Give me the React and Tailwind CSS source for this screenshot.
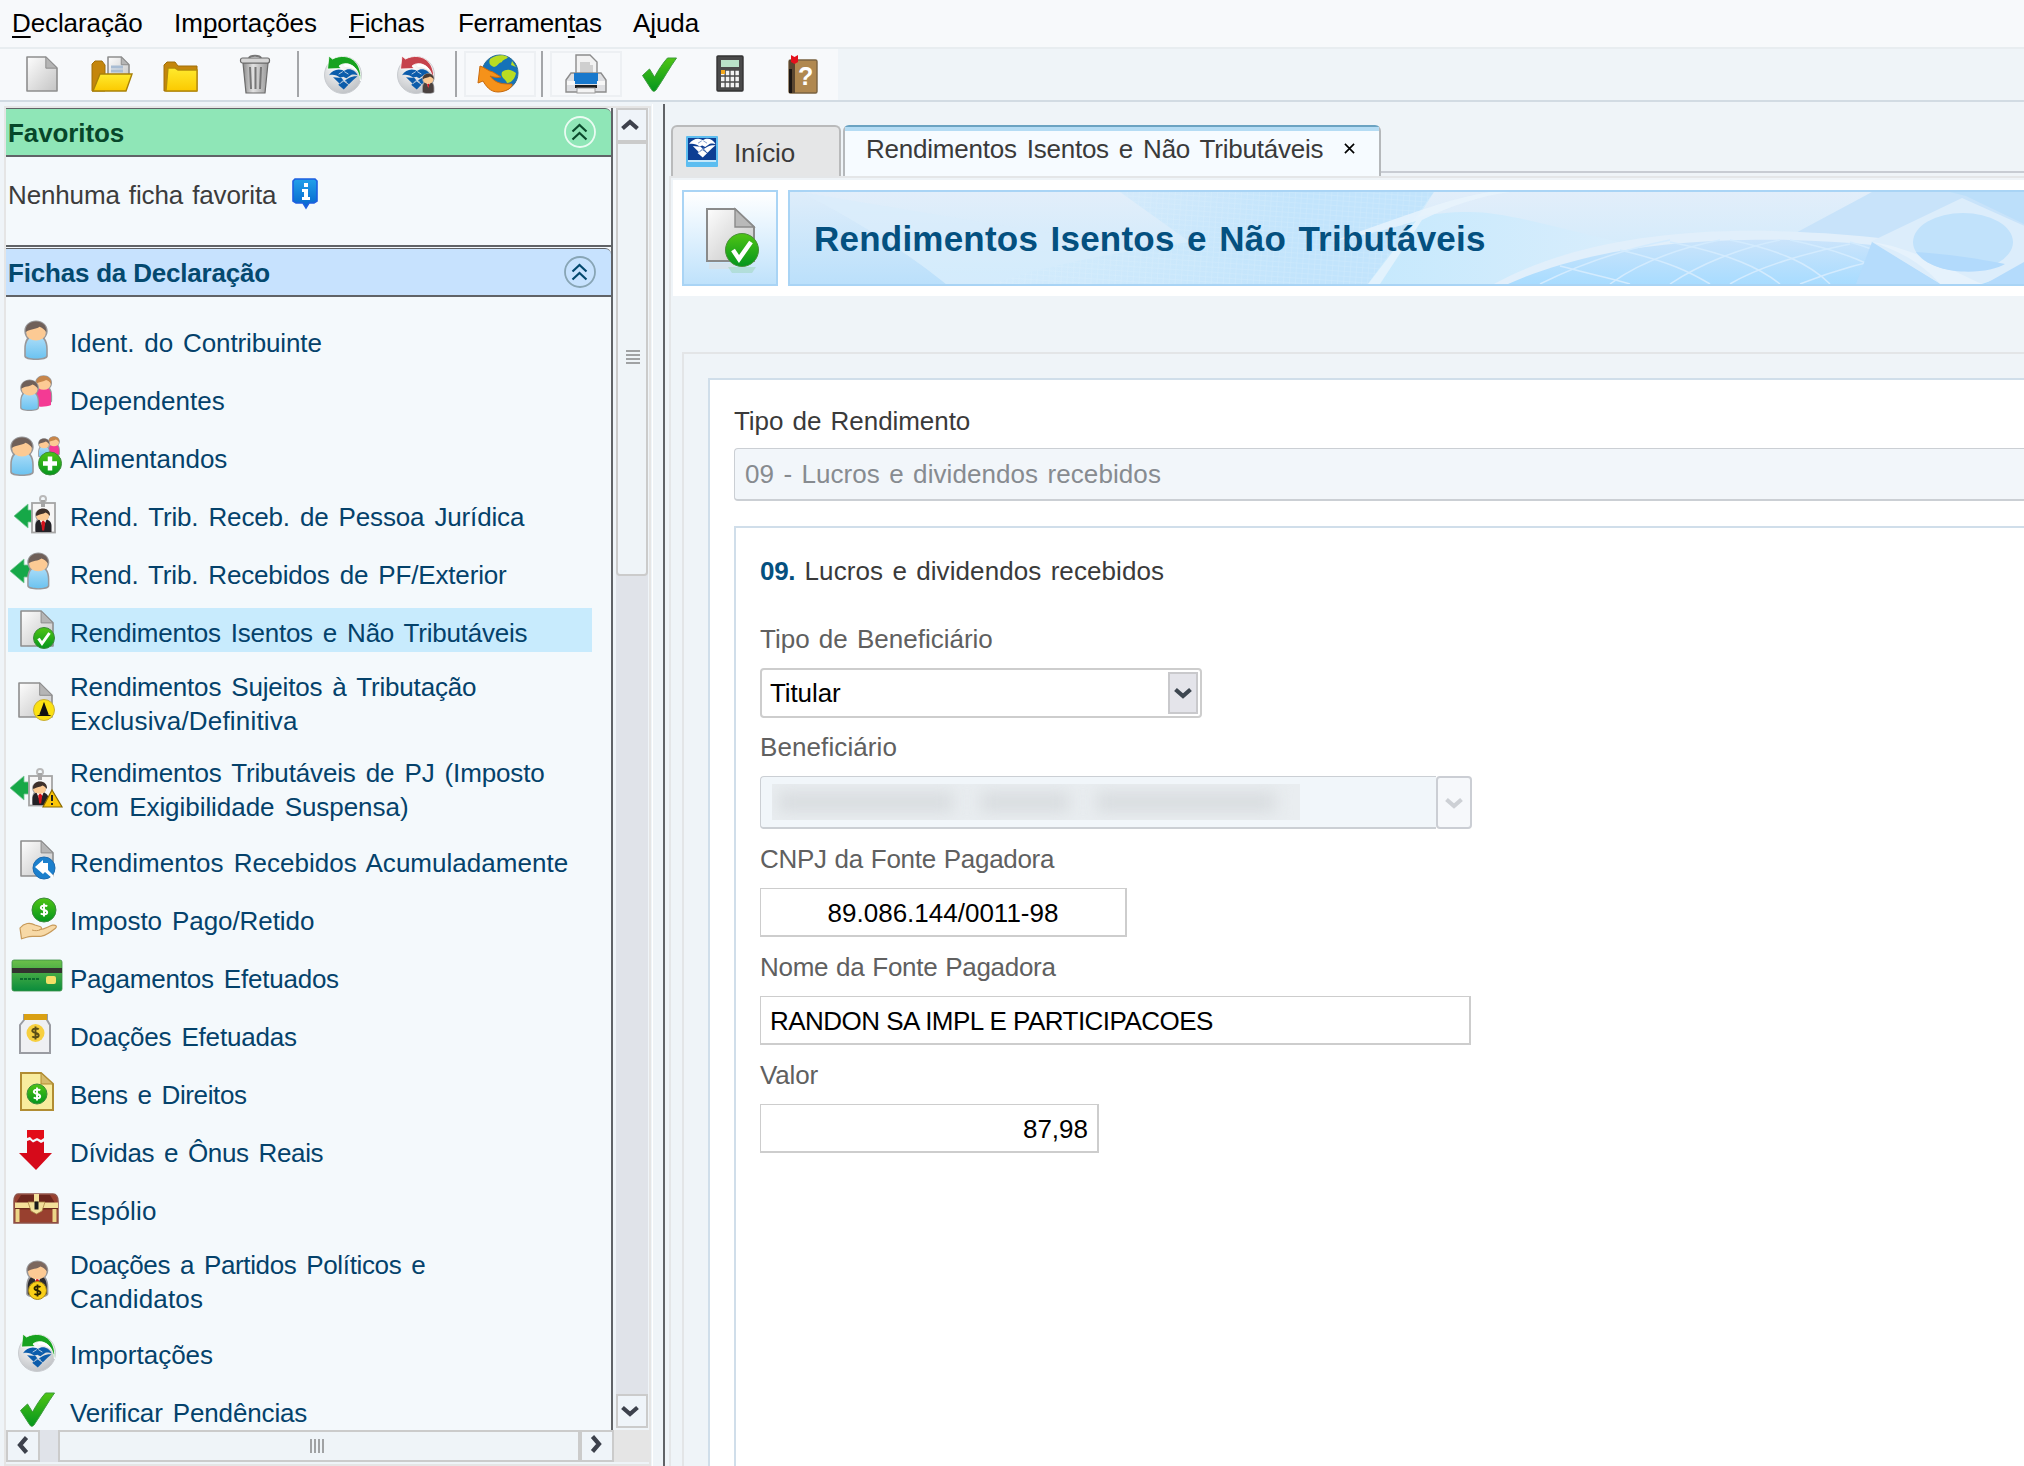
import React from "react";

/* ---------- shared gradients ---------- */
function Defs() {
  return (
    <svg width="0" height="0" className="absolute">
      <defs>
        <linearGradient id="paper" x1="0" y1="0" x2="1" y2="1">
          <stop offset="0" stopColor="#fdfdfd" />
          <stop offset="1" stopColor="#c4c4c4" />
        </linearGradient>
        <linearGradient id="yellow" x1="0" y1="0" x2="0" y2="1">
          <stop offset="0" stopColor="#ffea2e" />
          <stop offset="1" stopColor="#fbc900" />
        </linearGradient>
        <linearGradient id="shirt" x1="0" y1="0" x2="0" y2="1">
          <stop offset="0" stopColor="#aadcf8" />
          <stop offset="1" stopColor="#6cc3f0" />
        </linearGradient>
        <linearGradient id="greenup" x1="0" y1="0" x2="0" y2="1">
          <stop offset="0" stopColor="#4fc414" />
          <stop offset="1" stopColor="#04961e" />
        </linearGradient>
        <linearGradient id="card" x1="0" y1="0" x2="0" y2="1">
          <stop offset="0" stopColor="#6cc04a" />
          <stop offset="1" stopColor="#0a8c3c" />
        </linearGradient>
        <radialGradient id="ball" cx=".4" cy=".3" r=".8">
          <stop offset="0" stopColor="#ffffff" />
          <stop offset="1" stopColor="#b9bcc0" />
        </radialGradient>
        <linearGradient id="steel" x1="0" y1="0" x2="1" y2="0">
          <stop offset="0" stopColor="#8b8b8b" />
          <stop offset=".4" stopColor="#e2e2e2" />
          <stop offset="1" stopColor="#9a9a9a" />
        </linearGradient>
        <linearGradient id="bluebtn" x1="0" y1="0" x2="0" y2="1">
          <stop offset="0" stopColor="#22a0ea" />
          <stop offset="1" stopColor="#0464cc" />
        </linearGradient>
      </defs>
    </svg>
  );
}

/* ---------- icon building blocks ---------- */
function Person({ x = 0, y = 0, s = 1, hair = "#6f6059", body = "url(#shirt)", suit = false }) {
  return (
    <g transform={`translate(${x} ${y}) scale(${s})`}>
      <path d="M12 0.500C5.500 .5 .3 5 .3 11c0 3 1.200 5.400 2.600 7.200C.9 21 .2 25 .2 29v7c0 3 5.400 4 11.800 4s11.800-1 11.800-4v-7c0-4-.8-8-3-10.800C22.300 16.400 23.700 14 23.700 11 23.700 5 18.500.5 12 .5z" fill="#98989a" />
      <path d="M1.800 35.500V29c0-7 2.700-11 6.200-12h8c3.500 1 6.200 5 6.200 12v6.500c0 4-20.400 4-20.400 0z" fill={body} />
      {suit && <path d="M8.500 18h7L12 28z" fill="#fff" />}
      {suit && <path d="M12 19l2 3-2 8-2-8z" fill="#d3121c" />}
      <ellipse cx="12" cy="12.800" rx="9.800" ry="7.800" fill="#fcca94" />
      <path d="M1.600 12C1.200 5 6 1.500 12 1.500S22.800 5 22.400 12c-2-2.600-4.500-4.500-7-5.200C12 9.500 6 9 1.600 12z" fill={hair} />
    </g>
  );
}
function Doc({ x = 0, y = 0, w = 32, h = 36, fill = "url(#paper)", stroke = "#8e8e8e" }) {
  const f = w * 0.38;
  return (
    <g transform={`translate(${x} ${y})`}>
      <path d={`M1 1H${w - f}L${w - 1} ${f}V${h - 1}H1z`} fill={fill} stroke={stroke} strokeWidth="1.600" strokeLinejoin="round" />
      <path d={`M${w - f} 1V${f}H${w - 1}z`} fill="#b5b5b5" stroke={stroke} strokeWidth="1" strokeLinejoin="round" />
    </g>
  );
}
function Badge({ x, y, r = 10, children, fill = "url(#greenup)", stroke = "#3d8a3d" }) {
  return (
    <g transform={`translate(${x} ${y})`}>
      <circle r={r} fill={fill} stroke={stroke} strokeWidth="1" />
      {children}
    </g>
  );
}
const Tick = () => <path d="M-5.500 .5L-2 5.500 5.500-5" fill="none" stroke="#fff" strokeWidth="3" />;
const Dollar = ({ color = "#fff", s = 1 }) => (
  <path transform={`scale(${s})`} d="M4-4.500C2.500-6-4-6.200-4-2.800-4 .5 4-.5 4 2.800 4 6.200-2.500 6-4 4.300M0-8V8" fill="none" stroke={color} strokeWidth="2.400" />
);
function Emblem({ x = 0, y = 0, s = 1, color = "#0b5cab" }) {
  return (
    <g transform={`translate(${x} ${y}) scale(${s})`} fill={color}>
      <path d="M0 7.500C3 3 8 .8 13 2.500l1.500 1L17 2.200C21 .8 26 3 28 7.500c-2-.8-4-.8-6-.3L17 10.500l-3-1.500-3 1C8 7.500 4 6.500 0 7.500z" />
      <path d="M4 9.500l8.500 .8 2.500 2.700L10.500 16z" />
      <path d="M28 8.700c-3-.2-6 .3-8.500 1.500L15 13l4.500 3.500L24 12z" />
      <path d="M9 16.800l5.500-3 4.500 3.200-4.500 4.500z" />
      <path d="M9.500 6.500l4-2.500M19 6.500l-4-2.500M12.500 10.500l5 4M16 11l-5 4.500" stroke={color === "#fff" ? "#5a7fbd" : "#dfe8f2"} strokeWidth=".8" />
    </g>
  );
}
function GreenArrow({ x = 0, y = 0 }) {
  return <path transform={`translate(${x} ${y})`} d="M0 12L14 0v6h8v12h-8v6z" fill="#16a848" stroke="#79c796" strokeWidth=".8" />;
}
function IdCard({ x = 0, y = 0 }) {
  return (
    <g transform={`translate(${x} ${y})`}>
      <circle cx="12" cy="3" r="3" fill="none" stroke="#b9b9b9" strokeWidth="2" />
      <rect x="1" y="7" width="23" height="29.500" fill="#f6f6f6" stroke="#a5a5a5" strokeWidth="1.800" />
      <rect x="10" y="4" width="4" height="7" fill="#a5a5a5" />
      <Person x={4} y={12.500} s={0.6} hair="#3e302a" body="none" />
      <path d="M4.500 36V30c0-4 2-6 4.500-6.500h6.500c2.500.5 5 2.500 5 6.500v6z" fill="#222126" />
      <path d="M8.500 23.500h7L12.200 32z" fill="#fff" />
      <path d="M12.200 24l2 2.500-1 8h-2l-1-8z" fill="#d3121c" />
      <ellipse cx="12" cy="20" rx="6" ry="4.800" fill="#fcca94" />
      <path d="M5.500 20C5 15 8 12.500 12 12.500s7.500 2.500 7 7.500c-1.500-2-3-3-4.500-3.500-2 1.500-5.500 1.500-9 3.500z" fill="#3e302a" />
    </g>
  );
}
function ImportBall({ red = false }) {
  return (
    <g>
      <circle cx="20" cy="21" r="18.500" fill="url(#ball)" stroke="#c9ccd0" strokeWidth="1" />
      <path
        d="M4.500 15L6 2l3.500 3C17 1 27 1.500 32.500 8c4 4.500 5.800 11 5 19-1.500-8-4-13-8.500-15.500-5-2.800-9.500-2.300-13 .5L18 14.500z"
        fill={red ? "#c6424c" : "#17a21f"}
        stroke="#fff"
        strokeWidth=".8"
      />
      <path d="M20 10.500c5-2 11 0 15 8-4-4-9-5.500-13-5.500z" fill="#fff" />
      <Emblem x={6} y={13.500} s={1.02} />
    </g>
  );
}
const CheckShape = () => (
  <path d="M.5 19.500L7.500 13l5 8C17 13 21 7 25.500 2h9C28 11 21.500 23 14 34c-1.500 2-3.500 1.500-4.500-.5z" fill="url(#greenup)" stroke="#3c9a3c" strokeWidth="1" strokeLinejoin="round" />
);

/* ---------- sidebar icons, 52 x 40 ---------- */
const sideIcons = {
  ident: <Person x={14} y={0} />,
  dep: (
    <g>
      <Person x={25} y={-3} s={0.72} hair="#c7864a" body="#f43a94" />
      <path d="M27 14h14v13c-3 1.500-9 2-12 1.500z" fill="#f43a94" />
      <Person x={10} y={1} s={0.8} />
    </g>
  ),
  ali: (
    <g>
      <Person x={0} y={0} />
      <Person x={38} y={0} s={0.5} hair="#c7864a" body="#f43a94" />
      <Person x={28} y={2} s={0.5} />
      <Badge x={40} y={27.500} r={11.500}>
        <path d="M-7 0H7M0-7V7" stroke="#fff" strokeWidth="4.500" />
      </Badge>
    </g>
  ),
  pj: (
    <g>
      <GreenArrow x={4} y={10} />
      <IdCard x={21} y={2} />
    </g>
  ),
  pf: (
    <g>
      <GreenArrow x={0} y={7} />
      <Person x={17} y={0} s={0.94} />
    </g>
  ),
  isentos: (
    <g>
      <Doc x={10} y={0} w={34} h={37} />
      <Badge x={34} y={28} r={10.500}><Tick /></Badge>
    </g>
  ),
  exclusiva: (
    <g>
      <Doc x={8} y={0} w={35} h={36} />
      <Badge x={34} y={28} r={10.500} fill="#fbe112" stroke="#c9ae35">
        <path d="M-7.500 6L-1.500 3 0-8 1.500 3 7.500 6z" fill="#111" />
        <path d="M-4.500 4L0-8 4.500 4z" fill="#111" />
      </Badge>
    </g>
  ),
  suspensa: (
    <g>
      <GreenArrow x={0} y={8} />
      <IdCard x={18} y={1} />
      <path d="M42 22l10 17H33z" fill="#fbc60a" stroke="#8a6a00" strokeWidth="1.200" />
      <path d="M42 27v6M42 35v2" stroke="#222" strokeWidth="2" />
    </g>
  ),
  acum: (
    <g>
      <Doc x={10} y={0} w={34} h={37} />
      <Badge x={34} y={28} r={11} fill="#1c80cd" stroke="#1e6cb0">
        <path d="M-9 -1L-1-8V-5h5V2L10 8 8 10 1 4-1 6z" fill="#fff" />
      </Badge>
    </g>
  ),
  imposto: (
    <g>
      <Badge x={34} y={12} r={12}><Dollar s={0.8} /></Badge>
      <path d="M10 30c4-5 10-6 15-3l5 1.500c2.500.8 1.500 3-.5 3.200 6-.6 9-3.500 13-4.500 3-.6 5 .8 3 3-5 4-9 7-14 8-6 1-10-1-15 1l-5 1.500z" fill="#f7d9a6" stroke="#c79a5a" strokeWidth="1.200" />
      <path d="M22 32c3 1 6 .8 8-.2" fill="none" stroke="#c79a5a" strokeWidth="1" />
    </g>
  ),
  pagamentos: (
    <g>
      <rect x="2" y="4" width="50" height="31" rx="2" fill="url(#card)" stroke="#3d8f46" strokeWidth=".8" />
      <rect x="2" y="12" width="50" height="5" fill="#33332f" />
      <path d="M10 23h20" stroke="#0c6a2c" strokeWidth="2" strokeDasharray="3 1" />
      <rect x="36" y="20" width="10" height="8" rx="2" fill="#f3df66" />
    </g>
  ),
  doacoes: (
    <g>
      <path d="M14 1h23v5l3 5v28H10V11l4-5z" fill="#eff0f3" stroke="#9a9ca2" strokeWidth="2" />
      <rect x="14" y="0" width="23" height="6" fill="#d9a013" />
      <circle cx="25.500" cy="19" r="9" fill="#f7cf3f" />
      <g transform="translate(25.500 19)"><Dollar color="#5b4d16" s={0.8} /></g>
    </g>
  ),
  bens: (
    <g>
      <path d="M11 1h20l12 11v26H11z" fill="#f8ec9e" stroke="#b18d33" strokeWidth="2" />
      <path d="M31 1v11h12z" fill="#d6bb6b" stroke="#b18d33" strokeWidth="1" />
      <Badge x={27} y={22} r={10}><Dollar s={0.8} /></Badge>
    </g>
  ),
  dividas: (
    <g>
      <path d="M17 0h17v8l-3 2-4-2-4 2-3-3-3 1z" fill="#e30d18" />
      <path d="M17 11l3-1 3 2.500 4-2 4 2.500 3-1.500V23h8L26 40 9 23h8z" fill="#d60a1a" />
    </g>
  ),
  espolio: (
    <g>
      <path d="M8 6h35c3 0 5 3 5 7v22H4V13c0-4 2-7 4-7z" fill="#98402f" stroke="#8d5248" strokeWidth="1.500" />
      <path d="M11 7h29l5 8H6z" fill="#6b261d" />
      <path d="M5 14.500h43V20H5z" fill="#f3e09a" />
      <path d="M5 20.800h43" stroke="#6b2a1d" strokeWidth="1.500" />
      <path d="M7.500 21v13M44.500 21v13" stroke="#ecd688" strokeWidth="4" />
      <path d="M24 6h5v8h-5z" fill="#f3e09a" />
      <path d="M18 14h17l-3 9-5.500 3-5.500-3z" fill="#f3e09a" stroke="#a98645" strokeWidth=".8" />
      <path d="M26.500 13.500v8" stroke="#1a1a1a" strokeWidth="4" />
    </g>
  ),
  partidos: (
    <g>
      <Person x={16} y={0} s={0.94} hair="#7b675d" body="#2b2a2d" suit />
      <Badge x={27.500} y={30.500} r={9} fill="#f9cf17" stroke="#a88a1a"><Dollar color="#2b2300" s={0.75} /></Badge>
    </g>
  ),
  importacoes: <g transform="translate(7 0)"><ImportBall /></g>,
  verificar: <g transform="translate(10 1)"><CheckShape /></g>,
};

/* key, tracking class, lines */
const items = [
  ["ident", "tracking-[-0.13px]", "Ident. do Contribuinte"],
  ["dep", "tracking-[0px]", "Dependentes"],
  ["ali", "tracking-[-0.02px]", "Alimentandos"],
  ["pj", "tracking-[-0.16px]", "Rend. Trib. Receb. de Pessoa Jurídica"],
  ["pf", "tracking-[-0.17px]", "Rend. Trib. Recebidos de PF/Exterior"],
  ["isentos", "tracking-[-0.23px]", "Rendimentos Isentos e Não Tributáveis"],
  ["exclusiva", "tracking-[-0.18px]", "Rendimentos Sujeitos à Tributação", "Exclusiva/Definitiva", "tracking-[0.18px]"],
  ["suspensa", "tracking-[-0.15px]", "Rendimentos Tributáveis de PJ (Imposto", "com Exigibilidade Suspensa)", "tracking-[-0.05px]"],
  ["acum", "tracking-[0.02px]", "Rendimentos Recebidos Acumuladamente"],
  ["imposto", "tracking-[-0.08px]", "Imposto Pago/Retido"],
  ["pagamentos", "tracking-[-0.22px]", "Pagamentos Efetuados"],
  ["doacoes", "tracking-[-0.18px]", "Doações Efetuadas"],
  ["bens", "tracking-[-0.38px]", "Bens e Direitos"],
  ["dividas", "tracking-[-0.36px]", "Dívidas e Ônus Reais"],
  ["espolio", "tracking-[0.2px]", "Espólio"],
  ["partidos", "tracking-[-0.36px]", "Doações a Partidos Políticos e", "Candidatos", "tracking-[0.15px]"],
  ["importacoes", "tracking-[0px]", "Importações"],
  ["verificar", "tracking-[-0.14px]", "Verificar Pendências"],
];

/* ---------- toolbar icons, 44 x 42 ---------- */
const tb = {
  novo: <Doc x={6} y={3} w={32} h={36} />,
  abrir: (
    <g>
      <path d="M2 38V11l3-3h7l3 4v26z" fill="#c4860c" stroke="#a06f08" />
      <Doc x={17} y={3} w={23} h={26} />
      <path d="M21 14h12M21 18h12" stroke="#a9bdd4" strokeWidth="3" />
      <path d="M10 21h32l-6 17H3z" fill="url(#yellow)" stroke="#a98108" strokeWidth="1.400" />
    </g>
  ),
  fechar: (
    <g>
      <path d="M5 38V12l3-3h8l3 4h19v25z" fill="#c4860c" stroke="#a06f08" />
      <path d="M9 15h7l3 2h19v21H7z" fill="url(#yellow)" stroke="#b58a0a" strokeWidth="1.400" />
    </g>
  ),
  lixo: (
    <g>
      <path d="M16 5c1-3 11-3 12 0" fill="none" stroke="#777" strokeWidth="2" />
      <path d="M10 10h25l-3 30H13z" fill="url(#steel)" stroke="#6b6b6b" strokeWidth="1.200" />
      <path d="M17 14l1 22M22.500 14v22M28 14l-1 22" stroke="#777" strokeWidth="2" />
      <rect x="7.500" y="5" width="29" height="5" rx="2" fill="#d5d5d5" stroke="#6b6b6b" strokeWidth="1.200" />
    </g>
  ),
  imp: <g transform="translate(2 1)"><ImportBall /></g>,
  imp2: (
    <g>
      <g transform="translate(1 1)"><ImportBall red /></g>
      <Person x={27} y={20} s={0.52} hair="#4b3b33" body="#4a4240" suit />
    </g>
  ),
  globo: (
    <g>
      <circle cx="24" cy="20" r="18" fill="#1572b8" stroke="#2b6d94" />
      <path d="M14 6c5-4 13-5 18-2-2 3-5 2-6 5-4 1-4 4-8 5-3-1-6-3-4-8zM26 19c5-4 10-2 14 1-1 6-5 10-9 10-1-4-7-5-5-11zM36 8l4 6-5-2z" fill="#b9dc22" />
      <path d="M2 30l2-17c4 1 8 5 13 6l8 5c-4 1-8 0-11-1 6 8 13 8 22 8 1 4-7 8-14 8-8 0-12-6-15-11z" fill="#f5921a" stroke="#c96a0c" />
    </g>
  ),
  imprimir: (
    <g>
      <path d="M12 22V2h14l7 7v13z" fill="#f2f2f2" stroke="#8c8c8c" strokeWidth="1.400" />
      <path d="M16 9h10v3h3v9H16z" fill="#cfcfcf" />
      <path d="M2 27l5-7h30l5 7v12H2z" fill="#dedfe2" stroke="#8c8c8c" strokeWidth="1.400" />
      <rect x="10" y="20" width="24" height="11" fill="#1878cc" />
      <path d="M3 28h8v4H3zM33 28h8v4h-8z" fill="#f7f7f7" />
      <rect x="11" y="32" width="22" height="3" fill="#1d1d1d" />
      <rect x="13" y="35" width="18" height="5" fill="#f3f3f3" stroke="#9c9c9c" />
    </g>
  ),
  check: <g transform="translate(5 3)"><CheckShape /></g>,
  calc: (
    <g>
      <rect x="9" y="3" width="26" height="35" rx="1" fill="#4a4a4a" stroke="#333" strokeWidth="1.400" />
      <rect x="13" y="7" width="18" height="7" fill="#b9e2c8" />
      <path d="M13 20h18M13 26h18M13 32h18" stroke="#f2f2f2" strokeWidth="4.500" strokeDasharray="3.500 1.300" />
      <rect x="13" y="17" width="4" height="4" fill="#f5a81c" />
    </g>
  ),
  ajuda: (
    <g>
      <rect x="8" y="7" width="28" height="33" rx="1.500" fill="#b08850" stroke="#7a6240" strokeWidth="1.400" />
      <rect x="8" y="7" width="6" height="33" fill="#5a4630" />
      <rect x="8" y="16" width="3" height="24" fill="#1c1613" />
      <path d="M10 2l3.500 2L17 2v7l-3.500 2L10 9z" fill="#e3101c" />
    </g>
  ),
};

const Tb = ({ k, className = "" }) => (
  <svg viewBox="0 0 44 42" className={`h-[42px] w-[44px] shrink-0 ${className}`}>{tb[k]}</svg>
);

const Sep = ({ className }) => <div className={`h-[46px] w-[2px] shrink-0 bg-[#a4a6a9] ${className}`} />;

function Chevron({ dir, color = "#3d414c" }) {
  const rot = { up: "rotate-0", down: "rotate-180", left: "-rotate-90", right: "rotate-90" }[dir];
  return (
    <svg viewBox="0 0 18 12" className={`mr-[4px] h-[12px] w-[18px] shrink-0 ${rot}`}>
      <path d="M1.500 9.500L9 3l7.500 6.500" fill="none" stroke={color} strokeWidth="4.200" />
    </svg>
  );
}

function Collapse({ ring, arrow }) {
  return (
    <svg viewBox="0 0 32 32" className="h-8 w-8">
      <circle cx="16" cy="16" r="15" fill="none" stroke={ring} strokeWidth="1.800" />
      <path d="M8.500 15.500l7-6.500 7 6.500M8.500 23.500l7-6.500 7 6.500" fill="none" stroke={arrow} strokeWidth="2.200" />
    </svg>
  );
}

function Menu({ a = "", u, b, className }) {
  return (
    <div className={`shrink-0 text-[26px] leading-[46px] text-black ${className}`}>
      {a}
      <span className="underline decoration-2 underline-offset-[4px] [text-decoration-skip-ink:none]">{u}</span>
      {b}
    </div>
  );
}

function Sidebar() {
  return (
    <aside className="mt-[4px] ml-[4px] flex h-[1360px] w-[647px] shrink-0 flex-col border-2 border-[#e5e5e5]">
      <div className="flex h-[1322px] shrink-0">
        <div className="h-[1322px] w-[608px] shrink-0 overflow-hidden">
          <div className="w-[607px] border-r-2 border-[#606367] bg-[#f4f9fc]">
            <div className="flex h-[49px] items-center justify-between rounded-tr-md border-t border-b-2 border-[#606367] bg-[#8fe6b7] pr-[15px] pl-[2px] text-[#07472a]">
              <span className="pt-[3px] text-[26px] font-bold tracking-[-0.1px]">Favoritos</span>
              <Collapse ring="#eafbf2" arrow="#0b4a2c" />
            </div>
            <div className="flex h-[90px] items-center border-b-2 border-[#606367] pl-[2px] text-[26px] text-[#3c3c3c]">
              <span className="pb-[11px] tracking-[-0.14px] [word-spacing:2px]">Nenhuma ficha favorita</span>
              <svg viewBox="0 0 28 32" className="mb-[14px] ml-[15px] h-8 w-7">
                <path d="M4 1h20l2 2v20l-3 2h-5l-3 5-3-5H5l-3-2V3z" fill="url(#bluebtn)" stroke="#1d5fe0" strokeWidth="1.600" />
                <path d="M13 5h4v4h-4zM11 11h6v8h2v3h-8v-3h2v-5h-2z" fill="#fff" />
              </svg>
            </div>
            <div className="mt-px flex h-[49px] items-center justify-between rounded-tr-md border-t border-b-2 border-[#606367] bg-[#c7e2fe] pr-[15px] pl-[2px] text-[#04496f]">
              <span className="pt-[2px] text-[26px] font-bold tracking-[-0.2px]">Fichas da Declaração</span>
              <Collapse ring="#88a5b5" arrow="#04496f" />
            </div>
            <div className="flex h-[1200px] flex-col gap-[14px] pt-[21px] pl-[2px]">
              {items.map(([k, t, a, b, t2]) => (
                <div
                  key={k}
                  className={`flex w-[584px] shrink-0 items-center pl-[2px] ${b ? "h-[72px]" : "h-[44px]"} ${k === "isentos" ? "bg-[#c8ebfd]" : ""}`}
                >
                  <svg viewBox="0 0 52 40" className="h-[40px] w-[52px] shrink-0 overflow-visible">{sideIcons[k]}</svg>
                  <div className={`pl-[8px] text-[26px] leading-[34px] whitespace-nowrap text-[#04426b] [word-spacing:3px] ${b ? "pt-[3px]" : "pt-[5px]"}`}>
                    <div className={t}>{a}</div>
                    {b && <div className={t2}>{b}</div>}
                  </div>
                </div>
              ))}
            </div>
          </div>
        </div>
        {/* vertical scrollbar */}
        <div className="ml-[2px] flex h-[1320px] w-8 shrink-0 flex-col bg-[#e0e3e9]">
          <div className="flex h-[34px] items-center justify-center border-2 border-[#cbcbcb] bg-[#eff4f9]"><Chevron dir="up" /></div>
          <div className="flex h-[434px] items-center justify-center rounded-b-sm border-2 border-[#cbcbcb] bg-[#eff4f8]">
            <div className="mb-[5px] ml-[2px] flex flex-col gap-[2px]">
              <div className="h-[2px] w-[14px] bg-[#a0a2a4]" />
              <div className="h-[2px] w-[14px] bg-[#a0a2a4]" />
              <div className="h-[2px] w-[14px] bg-[#a0a2a4]" />
              <div className="h-[2px] w-[14px] bg-[#a0a2a4]" />
            </div>
          </div>
          <div className="mt-auto flex h-[34px] items-center justify-center border-2 border-[#cbcbcb] bg-[#eff4f9]"><Chevron dir="down" /></div>
        </div>
      </div>
      {/* horizontal scrollbar */}
      <div className="flex h-8 shrink-0 bg-[#e5e5e5]">
        <div className="flex w-[608px] bg-[#e0e3e9]">
          <div className="flex w-[34px] items-center justify-center border-2 border-[#cbcbcb] bg-[#eff4f9] pb-[2px] pl-[3px]"><Chevron dir="left" /></div>
          <div className="ml-[18px] flex w-[522px] items-center justify-center gap-[2px] border-2 border-[#cbcbcb] bg-[#eff4f8] pr-[4px]">
            <div className="h-[14px] w-[2px] bg-[#a0a2a4]" />
            <div className="h-[14px] w-[2px] bg-[#a0a2a4]" />
            <div className="h-[14px] w-[2px] bg-[#a0a2a4]" />
            <div className="h-[14px] w-[2px] bg-[#a0a2a4]" />
          </div>
          <div className="flex flex-1 items-center justify-center border-2 border-[#cbcbcb] bg-[#eff4f9] pb-[4px] pl-[2px]"><Chevron dir="right" /></div>
        </div>
      </div>
    </aside>
  );
}

function Banner() {
  return (
    <div className="relative ml-[10px] flex h-[96px] flex-1 items-center overflow-hidden border-y-2 border-l-2 border-[#a9d4f5]">
      <svg viewBox="0 0 1234 92" preserveAspectRatio="none" className="absolute inset-0 h-full w-full">
        <defs>
          <linearGradient id="bn" x1="0" y1="0" x2="0" y2="1">
            <stop offset="0" stopColor="#deedfa" />
            <stop offset="1" stopColor="#bbe0fb" />
          </linearGradient>
          <linearGradient id="bn2" x1="0" y1="0" x2="0" y2="1">
            <stop offset="0" stopColor="#e2eefa" />
            <stop offset="1" stopColor="#cbe9fc" />
          </linearGradient>
          <linearGradient id="mid" x1="0" y1="0" x2="1" y2="0">
            <stop offset="0" stopColor="#c4e6fc" stopOpacity="0" />
            <stop offset=".7" stopColor="#c2e4fc" />
          </linearGradient>
          <linearGradient id="swell" x1="0" y1="0" x2="1" y2="0">
            <stop offset="0" stopColor="#c6e9fd" />
            <stop offset="1" stopColor="#d8edfc" />
          </linearGradient>
          <linearGradient id="globe" x1="0" y1="0" x2="0" y2="1">
            <stop offset="0" stopColor="#cbe4fb" />
            <stop offset="1" stopColor="#a8dcff" />
          </linearGradient>
          <pattern id="dots" width="6" height="5" patternUnits="userSpaceOnUse" patternTransform="rotate(4)">
            <path d="M0 0H6M0 0V5" stroke="#e6f4fe" strokeWidth=".9" />
          </pattern>
        </defs>
        <rect width="1234" height="92" fill="url(#bn)" />
        <path d="M10 0C60 25 110 55 156 92H1234V0z" fill="url(#bn2)" />
        <path d="M10 0L340 55 620 92H156C110 55 60 25 10 0z" fill="#d9edfc" opacity=".6" />
        <path d="M330 0H644L578 92H200C270 70 330 60 400 50z" fill="url(#mid)" />
        <path d="M330 0H644L578 92H200C270 70 330 60 400 50z" fill="url(#dots)" opacity=".4" />
        <path d="M644 0L578 92H710C740 78 780 62 830 50C780 40 720 20 680 20C660 20 640 22 628 25z" fill="url(#swell)" />
        <path d="M540 50C580 42 610 34 626 29L578 92H590L632 28C660 14 690 4 720 0H700C660 6 620 22 540 50z" fill="#e8f4fd" opacity=".8" />
        <path d="M1000 44L1082 0H1234V92H1000z" fill="#c8e3fa" />
        <path d="M704 92C780 50 890 34 1010 40C1100 44 1180 56 1234 78V92z" fill="#e1effb" />
        <path d="M718 92C790 60 880 46 1000 48C1090 50 1170 62 1234 88V92z" fill="url(#globe)" />
        <g fill="none" stroke="#d3ebfe" strokeWidth="1.500">
          <path d="M750 92C790 72 830 58 880 48M820 92C850 70 890 56 930 48M880 92C910 72 950 56 990 48M940 92C970 74 1020 60 1060 52M1010 92C1040 80 1080 68 1120 62" />
          <path d="M770 74C800 82 820 86 840 92M830 58C880 70 900 80 920 92M880 50C940 62 970 76 990 92M940 48C990 58 1020 72 1040 92M1000 48C1050 58 1090 74 1110 92M1060 50C1100 62 1120 72 1140 92" />
        </g>
        <path d="M1080 50L1172 6 1270 50 1234 78 1192 92H1150z" fill="#dcedfb" />
        <path d="M1082 50C1120 62 1140 80 1150 92H1175L1192 92C1165 80 1120 55 1082 50z" fill="#e6f2fc" />
        <ellipse cx="1173" cy="50" rx="50" ry="29" fill="#c1e2fb" />
        <path d="M1126 60C1160 62 1195 68 1215 72C1200 82 1145 86 1126 60z" fill="#b2dafc" />
        <path d="M1066 92L1082 50 1150 92z" fill="#b5dcfc" />
        <path d="M1195 92L1234 70V92z" fill="#b4dbfc" />
        <path d="M1176 4L1234 32V0H1160z" fill="#bcdffa" />
      </svg>
      <h1 className="relative pt-[3px] pl-[24px] text-[35px] font-bold tracking-[0.22px] text-[#04507f] [word-spacing:2.500px]">
        Rendimentos Isentos e Não Tributáveis
      </h1>
    </div>
  );
}

const Label = ({ children, className }) => (
  <div className={`shrink-0 text-[26px] leading-[30px] text-[#606060] ${className}`}>{children}</div>
);

const Input = ({ children, className }) => (
  <div className={`flex h-[49px] shrink-0 items-center border border-r-2 border-b-2 border-[#cdcdcd] bg-white px-[9px] pt-[2px] text-[26px] text-black ${className}`}>{children}</div>
);

function Content() {
  return (
    <main className="flex h-[1366px] min-w-0 flex-1 flex-col pt-[23px] pl-[4px]">
      {/* tabs */}
      <div className="flex h-[51px] shrink-0 pl-[2px]">
        <div className="flex w-[170px] shrink-0 items-center rounded-t-md border-2 border-b-0 border-[#b9babb] bg-[#e5e6e7] pl-[13px]">
          <svg viewBox="0 0 32 32" className="h-8 w-8">
            <rect width="32" height="31" rx="1" fill="#5cbdf0" />
            <rect x="2" y="2" width="28" height="22" fill="#0d3e93" />
            <Emblem x={3} y={1} s={0.95} color="#fff" />
            <rect x="2" y="24" width="28" height="2" fill="#c5e8fa" />
          </svg>
          <span className="pt-[4px] pl-[16px] text-[26px] tracking-[-0.2px] text-[#3a3a3a]">Início</span>
        </div>
        <div className="ml-[2px] flex w-[538px] shrink-0 flex-col rounded-t-md border-x-2 border-t-2 border-[#b5b8bb] border-t-[#6ba3c2] bg-[#f6fbff]">
          <div className="h-[4px] shrink-0 bg-[#b5dcf4]" />
          <div className="flex items-center pl-[21px]">
            <span className="text-[26px] leading-[36px] tracking-[-0.23px] whitespace-nowrap text-[#3a3a3a] [word-spacing:3px]">Rendimentos Isentos e Não Tributáveis</span>
            <svg viewBox="0 0 12 12" className="mb-[2px] ml-[21px] h-[11px] w-[11px]">
              <path d="M1 1l10 10M11 1L1 11" stroke="#000" strokeWidth="1.800" />
            </svg>
          </div>
        </div>
        <div className="h-[48px] flex-1 border-b-2 border-[#c8ccd3]" />
      </div>
      <div className="flex min-h-0 flex-1 flex-col border-t-2 border-l-2 border-[#e4e6e8]">
        <div className="mt-[2px] ml-[2px] flex h-[116px] shrink-0 bg-white pt-[10px] pl-[9px]">
          <div className="flex h-[96px] w-[96px] shrink-0 items-center justify-center border-2 border-[#a9d4f5] bg-linear-to-b from-white to-[#bfe2fb]">
            <svg viewBox="0 0 56 68" className="mt-[6px] ml-[4px] h-[68px] w-[56px]">
              <path d="M3 2h28l19 18v34H3z" fill="url(#paper)" stroke="#8a8a8a" strokeWidth="2" />
              <path d="M31 2v18h19z" fill="#b9b9b9" stroke="#8a8a8a" strokeWidth="1.400" />
              <path d="M5 56h26v6H5z" fill="#d8dfe5" opacity=".7" />
              <path d="M24 60h28l-4 6H28z" fill="#9bd6b8" opacity=".5" />
              <circle cx="38" cy="43" r="16.500" fill="url(#greenup)" stroke="#4a8f3a" />
              <path d="M29 43l6 9 12-17" fill="none" stroke="#fff" strokeWidth="4.500" />
            </svg>
          </div>
          <Banner />
        </div>
        <div className="mt-[56px] ml-[11px] flex min-h-0 flex-1 flex-col border-t-2 border-l-2 border-[#e3e5e7] pt-[24px] pl-[24px]">
          <div className="flex min-h-0 flex-1 flex-col border-t-2 border-l-2 border-[#d0deea] bg-white pl-[24px]">
            <div className="mt-[26px] shrink-0 text-[26px] leading-[30px] tracking-[-0.05px] text-[#3a3a3a] [word-spacing:2px]">Tipo de Rendimento</div>
            <div className="mt-[12px] flex h-[53px] shrink-0 items-center rounded-l-sm border border-r-0 border-b-2 border-[#cbcfd4] bg-[#f2f6fa] pt-px pl-[10px] text-[26px] tracking-[0.08px] text-[#878b90] [word-spacing:2px]">
              09 - Lucros e dividendos recebidos
            </div>
            <div className="mt-[25px] flex min-h-0 flex-1 flex-col items-start border-t-2 border-l-2 border-[#d0deea] pl-[24px]">
              <div className="mt-[28px] shrink-0 text-[26px] leading-[30px] tracking-[0.08px] text-[#3a3a3a] [word-spacing:2px]">
                <b className="tracking-[-0.3px] text-[#04507f]">09.</b> Lucros e dividendos recebidos
              </div>
              <Label className="mt-[38px] tracking-[0px] [word-spacing:2px]">Tipo de Beneficiário</Label>
              <div className="mt-[14px] flex h-[50px] w-[442px] shrink-0 items-center justify-between rounded border-2 border-[#cdcdcd] bg-white pr-[2px] pl-[8px] text-[26px] text-black">
                <span className="tracking-[-0.1px]">Titular</span>
                <div className="flex h-[42px] w-[30px] items-center justify-center border-2 border-[#c9c9cc] bg-[#e4e4ea] pl-[4px]"><Chevron dir="down" color="#3d4650" /></div>
              </div>
              <Label className="mt-[14px] tracking-[0.1px]">Beneficiário</Label>
              <div className="mt-[14px] flex h-[53px] w-[712px] shrink-0">
                <div className="flex w-[676px] items-center rounded-l border border-r-0 border-b-2 border-[#cbcfd4] bg-[#f1f6fa] pl-[11px]">
                  <div className="flex h-[36px] w-[528px] items-center gap-[26px] overflow-hidden bg-[#e9edf0] px-[6px]">
                    <div className="h-[20px] w-[176px] rounded bg-[#d8dcdf] blur-[8px]" />
                    <div className="h-[20px] w-[90px] rounded bg-[#d8dcdf] blur-[8px]" />
                    <div className="h-[20px] w-[180px] rounded bg-[#d8dcdf] blur-[8px]" />
                  </div>
                </div>
                <div className="flex w-[36px] items-center justify-center rounded border-2 border-[#cbced4] bg-[#f6f8fb] pl-[4px]"><Chevron dir="down" color="#cdd0d5" /></div>
              </div>
              <Label className="mt-[15px] tracking-[-0.3px] [word-spacing:1px]">CNPJ da Fonte Pagadora</Label>
              <Input className="mt-[14px] w-[367px] justify-center">89.086.144/0011-98</Input>
              <Label className="mt-[15px] tracking-[-0.3px] [word-spacing:1px]">Nome da Fonte Pagadora</Label>
              <Input className="mt-[14px] w-[711px]"><span className="tracking-[-0.52px]">RANDON SA IMPL E PARTICIPACOES</span></Input>
              <Label className="mt-[15px] tracking-[-0.15px]">Valor</Label>
              <Input className="mt-[14px] w-[339px] justify-end">87,98</Input>
            </div>
          </div>
        </div>
      </div>
    </main>
  );
}

export default function App() {
  return (
    <div className="flex h-[1466px] w-full flex-col overflow-hidden bg-[#eff4f8] font-['Liberation_Sans',Arial,sans-serif]">
      <Defs />
      <nav className="flex h-[49px] shrink-0 border-b-2 border-[#e8edf0] bg-[#f7f9fb] pl-[12px]">
        <Menu u="D" b="eclaração" className="w-[162px] tracking-[-0.1px]" />
        <Menu a="Im" u="p" b="ortações" className="w-[175px] tracking-[0px]" />
        <Menu u="F" b="ichas" className="w-[109px] tracking-[-0.15px]" />
        <Menu a="Ferramen" u="t" b="as" className="w-[175px] tracking-[-0.35px]" />
        <Menu a="A" u="j" b="uda" className="tracking-[-0.1px]" />
      </nav>
      <div className="flex h-[53px] shrink-0 border-b-2 border-[#d2dbe3]">
        <div className="flex w-[838px] shrink-0 items-center bg-[#f7f9fb] pb-[2px] pl-[20px]">
          <Tb k="novo" />
          <Tb k="abrir" className="ml-[26px]" />
          <Tb k="fechar" className="ml-[25px]" />
          <Tb k="lixo" className="ml-[30px]" />
          <Sep className="ml-[20px]" />
          <Tb k="imp" className="ml-[22px]" />
          <Tb k="imp2" className="ml-[30px]" />
          <Sep className="ml-[16px]" />
          <div className="ml-[7px] flex h-[46px] w-[72px] shrink-0 items-center justify-center border-2 border-[#edf0f3] pr-[4px]"><Tb k="globo" /></div>
          <Sep className="ml-[5px]" />
          <div className="ml-[7px] flex h-[46px] w-[72px] shrink-0 items-center justify-center border-2 border-[#edf0f3]"><Tb k="imprimir" /></div>
          <Tb k="check" className="ml-[15px]" />
          <Tb k="calc" className="ml-[27px]" />
          <div className="relative ml-[29px] h-[42px] w-[44px] shrink-0">
            <Tb k="ajuda" />
            <span className="absolute top-[9px] left-[17px] text-[25px] leading-[28px] font-bold text-white">?</span>
          </div>
        </div>
      </div>
      <div className="flex h-[1364px] shrink-0">
        <div className="flex w-[652px] shrink-0 flex-col">
          <Sidebar />
          <div className="ml-[359px] h-[2px] w-[78px] rounded-t bg-[#a9b5bd]" />
        </div>
        <div className="mt-[2px] w-[13px] shrink-0 border-r-2 border-l border-r-[#606367] border-l-white" />
        <Content />
      </div>
    </div>
  );
}
